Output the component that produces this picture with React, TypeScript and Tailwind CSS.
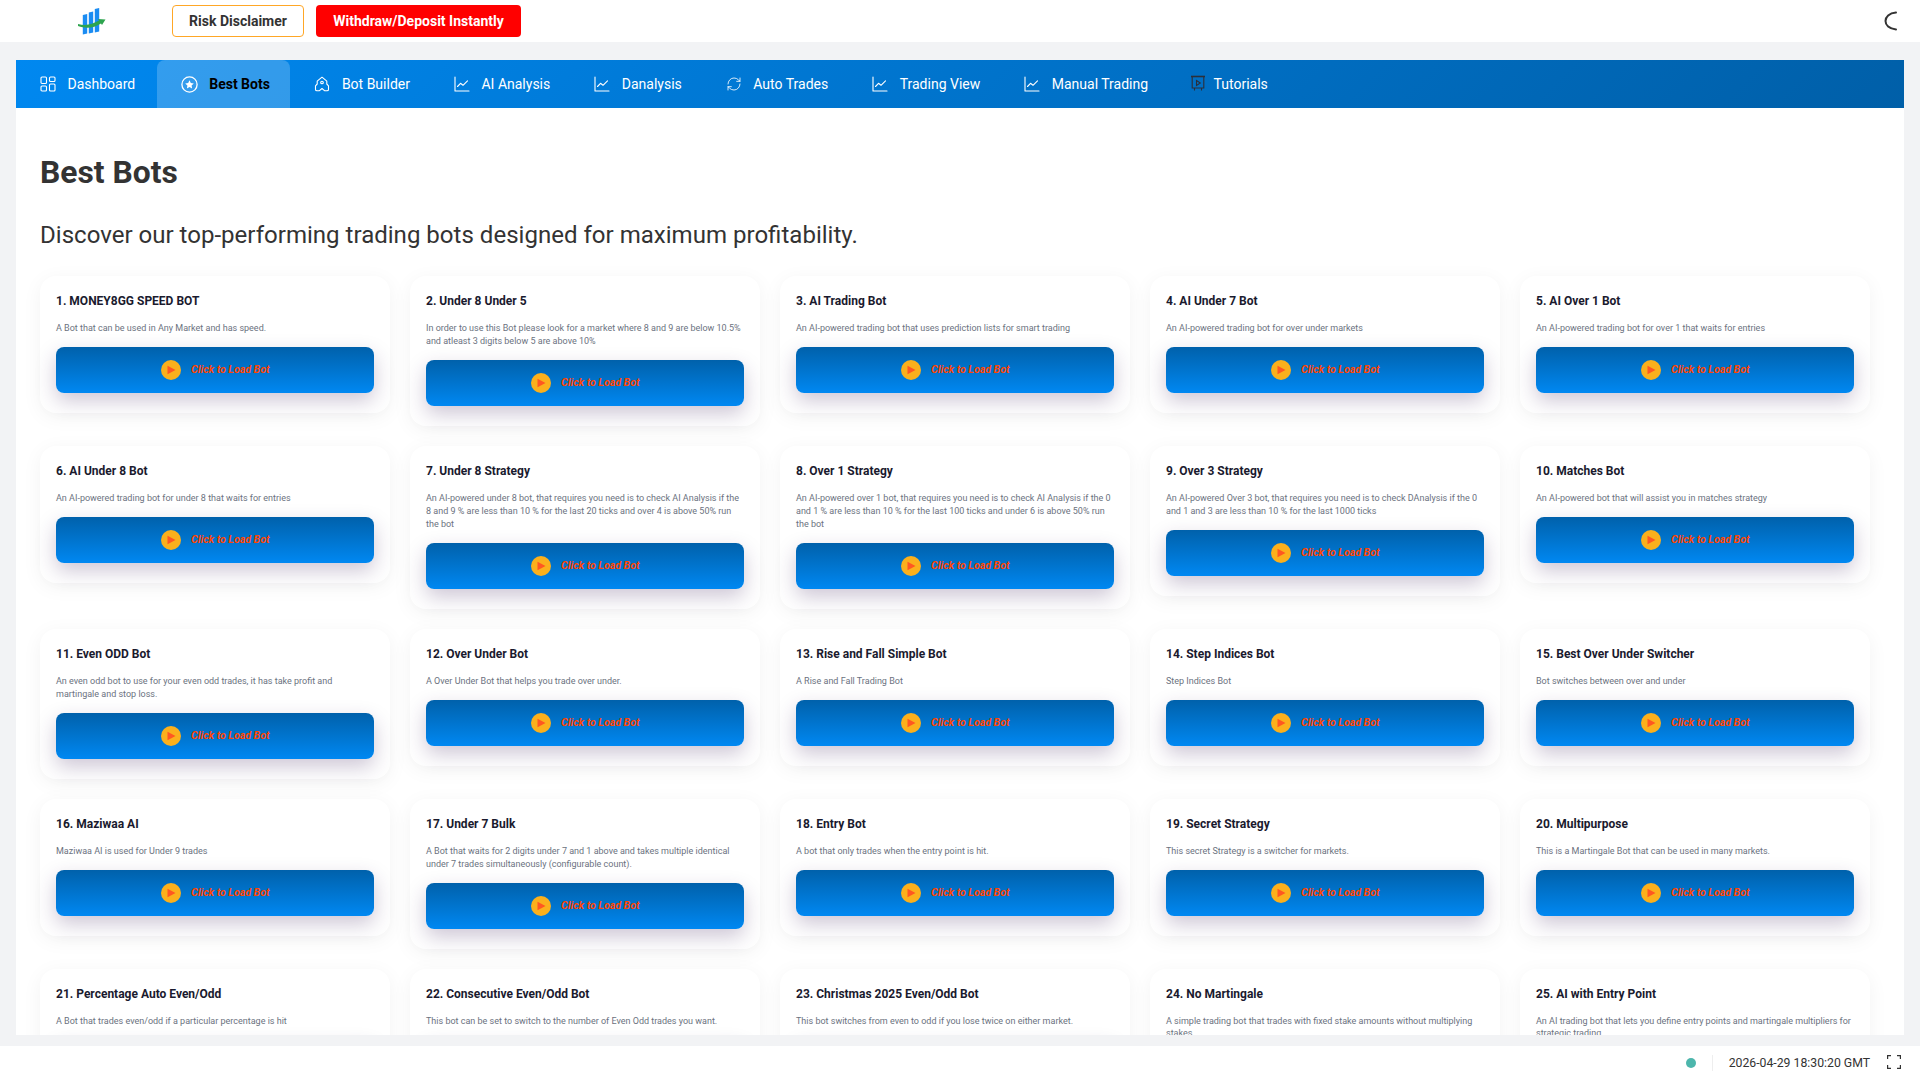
import { RefreshCw } from "lucide-react";

const font = { fontFamily: "Roboto, sans-serif" };

const bots = [
  ["1. MONEY8GG SPEED BOT", "A Bot that can be used in Any Market and has speed."],
  ["2. Under 8 Under 5", "In order to use this Bot please look for a market where 8 and 9 are below 10.5% and atleast 3 digits below 5 are above 10%"],
  ["3. AI Trading Bot", "An AI-powered trading bot that uses prediction lists for smart trading"],
  ["4. AI Under 7 Bot", "An AI-powered trading bot for over under markets"],
  ["5. AI Over 1 Bot", "An AI-powered trading bot for over 1 that waits for entries"],
  ["6. AI Under 8 Bot", "An AI-powered trading bot for under 8 that waits for entries"],
  ["7. Under 8 Strategy", "An AI-powered under 8 bot, that requires you need is to check AI Analysis if the 8 and 9 % are less than 10 % for the last 20 ticks and over 4 is above 50% run the bot"],
  ["8. Over 1 Strategy", "An AI-powered over 1 bot, that requires you need is to check AI Analysis if the 0 and 1 % are less than 10 % for the last 100 ticks and under 6 is above 50% run the bot"],
  ["9. Over 3 Strategy", "An AI-powered Over 3 bot, that requires you need is to check DAnalysis if the 0 and 1 and 3 are less than 10 % for the last 1000 ticks"],
  ["10. Matches Bot", "An AI-powered bot that will assist you in matches strategy"],
  ["11. Even ODD Bot", "An even odd bot to use for your even odd trades, it has take profit and martingale and stop loss."],
  ["12. Over Under Bot", "A Over Under Bot that helps you trade over under."],
  ["13. Rise and Fall Simple Bot", "A Rise and Fall Trading Bot"],
  ["14. Step Indices Bot", "Step Indices Bot"],
  ["15. Best Over Under Switcher", "Bot switches between over and under"],
  ["16. Maziwaa AI", "Maziwaa AI is used for Under 9 trades"],
  ["17. Under 7 Bulk", "A Bot that waits for 2 digits under 7 and 1 above and takes multiple identical under 7 trades simultaneously (configurable count)."],
  ["18. Entry Bot", "A bot that only trades when the entry point is hit."],
  ["19. Secret Strategy", "This secret Strategy is a switcher for markets."],
  ["20. Multipurpose", "This is a Martingale Bot that can be used in many markets."],
  ["21. Percentage Auto Even/Odd", "A Bot that trades even/odd if a particular percentage is hit"],
  ["22. Consecutive Even/Odd Bot", "This bot can be set to switch to the number of Even Odd trades you want."],
  ["23. Christmas 2025 Even/Odd Bot", "This bot switches from even to odd if you lose twice on either market."],
  ["24. No Martingale", "A simple trading bot that trades with fixed stake amounts without multiplying stakes."],
  ["25. AI with Entry Point", "An AI trading bot that lets you define entry points and martingale multipliers for strategic trading."],
];

function DashboardIcon() {
  return (
    <svg width="16" height="16" viewBox="0 0 16 16" fill="none" stroke="currentColor" strokeWidth="1.1">
      <rect x="1" y="1" width="5.5" height="6.5" rx="1" />
      <rect x="9.5" y="1" width="5.5" height="4.5" rx="1" />
      <rect x="1" y="10" width="5.5" height="5" rx="1" />
      <rect x="9.5" y="8" width="5.5" height="7" rx="1" />
    </svg>
  );
}

function StarIcon() {
  return (
    <svg width="17" height="17" viewBox="0 0 17 17">
      <circle cx="8.5" cy="8.5" r="7.6" fill="none" stroke="currentColor" strokeWidth="1.3" />
      <path d="M8.5 4.3l1.3 2.7 3 .4-2.2 2.1.5 3-2.6-1.4-2.6 1.4.5-3-2.2-2.1 3-.4z" fill="currentColor" />
    </svg>
  );
}

function BuilderIcon() {
  return (
    <svg width="16" height="16" viewBox="0 0 16 16" fill="none" stroke="currentColor" strokeWidth="1.1" strokeLinejoin="round">
      <path d="M8 1.200L12.800 5.200V8L14.500 9.800V13.500Q14.500 14.800 13 14.800H10.800L8 12.500 5.200 14.800H3Q1.500 14.800 1.500 13.500V9.800L3.200 8V5.200Z" />
      <circle cx="8" cy="6.500" r="1.300" />
    </svg>
  );
}

function ChartIcon() {
  return (
    <svg width="16" height="16" viewBox="0 0 16 16" fill="none" stroke="currentColor" strokeWidth="1.1" strokeLinecap="round" strokeLinejoin="round">
      <path d="M1 1v14h14" />
      <path d="M3.500 10.500l3-3.200 2.500 2 4.500-4.500" />
    </svg>
  );
}

function TutorialIcon() {
  return (
    <svg width="16" height="18" viewBox="0 0 16 18" fill="none" stroke="#2b2f3a" strokeWidth="1.1">
      <path d="M1 1.500h14" strokeWidth="1.600" />
      <path d="M2.200 2v11h11.600V2" />
      <path d="M6.500 5.500l3.800 2.500-3.800 2.500z" />
      <path d="M4.500 13v2.500M11.500 13v2.500" />
    </svg>
  );
}

const plainItem = "flex h-full items-center gap-[11.5px] pr-5 pl-6";

const navItems = [
  {
    label: "Dashboard",
    icon: <DashboardIcon />,
    cls: "flex h-full items-center gap-[11.5px] pr-[21.5px] pl-6",
  },
  {
    label: "Best Bots",
    icon: <StarIcon />,
    cls: "flex h-full items-center gap-[11.5px] rounded-t-lg bg-white/20 pr-[20.5px] pl-6 font-bold text-black",
  },
  { label: "Bot Builder", icon: <BuilderIcon />, cls: plainItem },
  { label: "AI Analysis", icon: <ChartIcon />, cls: plainItem },
  { label: "Danalysis", icon: <ChartIcon />, cls: plainItem },
  { label: "Auto Trades", icon: <RefreshCw size={16} strokeWidth={1.25} />, cls: plainItem },
  { label: "Trading View", icon: <ChartIcon />, cls: plainItem },
  { label: "Manual Trading", icon: <ChartIcon />, cls: plainItem },
  { label: "Tutorials", icon: <TutorialIcon />, cls: "flex h-full items-center gap-2 pr-5 pl-[21.5px]" },
];

function Logo() {
  return (
    <svg width="28" height="28" viewBox="0 0 28 28">
      <path d="M4.800 8l4.400-1v19.500l-4.400 1z" fill="#1a8cf2" />
      <path d="M10.800 5.500l4.400-1v21l-4.400 1z" fill="#1a8cf2" />
      <path d="M16.800 2l4.400-1v23.500l-4.400 1z" fill="#1a8cf2" />
      <path d="M0 17c8 2 14 .5 21-3.500l-1-1.500 7.500 .5-3.500 5.500-1-1.500c-7 4.500-15 5.500-23 2.500z" fill="#2da44e" />
    </svg>
  );
}

function BotCard({ title, desc }: { title: string; desc: string }) {
  return (
    <div className="rounded-2xl bg-white px-4 pt-[15px] pb-5 shadow-[0_4px_20px_rgba(0,0,0,0.05)]">
      <h3 className="mb-[11px] text-xs leading-5 font-bold text-[#1a1a2e]">{title}</h3>
      <p className="mb-[12.1px] text-[9px] leading-[12.9px] text-[#6b7280]">{desc}</p>
      <button className="flex h-[46px] w-full items-center justify-center gap-[10.5px] rounded-lg bg-gradient-to-b from-[#0061ab] to-[#0088f2] shadow-[0_8px_20px_rgba(60,30,90,0.25)]">
        <span className="flex h-5 w-5 items-center justify-center rounded-full bg-[#fbb01c]">
          <svg width="10" height="10" viewBox="0 0 10 10">
            <path d="M1.500 0.800L9.500 5l-8 4.200z" fill="#ff5722" />
          </svg>
        </span>
        <span className="text-[10.6px] font-bold text-[#ff4500] italic">Click to Load Bot</span>
      </button>
    </div>
  );
}

export default function App() {
  return (
    <div className="flex h-screen flex-col overflow-hidden bg-[#f2f3f5]" style={font}>
      <header className="flex h-[42px] shrink-0 items-center bg-white">
        <div className="ml-[78px] flex h-7 w-[94px] items-center">
          <Logo />
        </div>
        <button className="h-[32px] w-[132px] rounded border border-[#ffa726] text-sm font-bold text-[#333]">
          Risk Disclaimer
        </button>
        <button className="ml-3 h-[32px] w-[205px] rounded bg-[#ff0000] text-sm font-bold text-white">
          Withdraw/Deposit Instantly
        </button>
        <svg className="mr-[21px] ml-auto" width="16" height="22" viewBox="0 0 16 22" fill="none">
          <path d="M13 2.500C6 3 2.500 7 2.500 11S6 19 13 19.500" stroke="#333" strokeWidth="2" strokeLinecap="round" />
        </svg>
      </header>

      <main className="mx-4 mt-[18px] flex min-h-0 flex-1 flex-col overflow-hidden bg-white">
        <nav className="flex h-12 shrink-0 items-center bg-[linear-gradient(135deg,#0088f0,#005fa8)] text-sm text-white">
          {navItems.map((item) => (
            <div key={item.label} className={item.cls}>
              <span className="text-white">{item.icon}</span>
              <span>{item.label}</span>
            </div>
          ))}
        </nav>
        <div className="min-h-0 flex-1 overflow-hidden px-6">
          <h1 className="mt-[42px] text-[31.8px] leading-[44px] font-bold text-[#333]">Best Bots</h1>
          <p className="mt-[25px] text-[24.06px] leading-8 text-[#333]">
            Discover our top-performing trading bots designed for maximum profitability.
          </p>
          <div className="mt-[25px] grid w-[1830px] grid-cols-5 items-start gap-5">
            {bots.map(([title, desc]) => (
              <BotCard key={title} title={title} desc={desc} />
            ))}
          </div>
        </div>
      </main>

      <footer className="mt-[11px] flex h-[34px] shrink-0 items-center bg-white text-[12.25px] text-[#333]">
        <span className="ml-auto h-[10px] w-[10px] rounded-full bg-[#4db6ac]" />
        <span className="mx-4 h-4 w-px bg-[#eeeeee]" />
        <span>2026-04-29 18:30:20 GMT</span>
        <svg className="mr-[19px] mb-[3px] ml-[17px]" width="14" height="14" viewBox="0 0 14 14" fill="none" stroke="#333" strokeWidth="1.2">
          <path d="M0.600 4V0.600H4M10 0.600h3.400V4M13.400 10v3.400H10M4 13.400H0.600V10" />
        </svg>
      </footer>
    </div>
  );
}
